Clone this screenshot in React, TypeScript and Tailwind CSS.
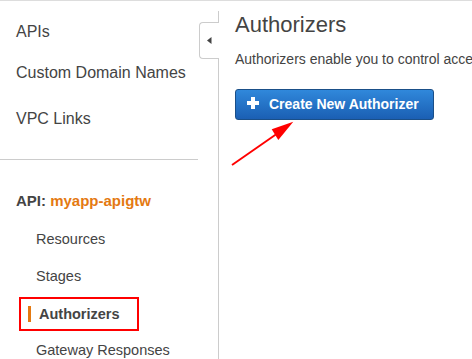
import React from 'react';

// Sidebar links of the API Gateway console
const TOP_LINKS = [
  { label: 'APIs', className: 'mt-0' },
  { label: 'Custom Domain Names', className: 'mt-[21px]' },
  { label: 'VPC Links', className: 'mt-[26px]' },
];

const API_LINKS = ['Resources', 'Stages', 'Authorizers', 'Gateway Responses'];

function PlusIcon() {
  return (
    <svg width="12" height="12" viewBox="0 0 12 12" className="mb-1 shrink-0">
      <rect x="4" y="0" width="4" height="12" fill="#fff" />
      <rect x="0" y="4" width="12" height="4" fill="#fff" />
    </svg>
  );
}

function RedArrow() {
  return (
    <svg
      width="70"
      height="55"
      viewBox="0 0 70 55"
      className="absolute left-[228px] top-[115px] pointer-events-none"
    >
      <line x1="4" y1="49" x2="50" y2="17" stroke="#f00" strokeWidth="2" />
      <polygon points="65.3,5.7 43.7,13.3 50.3,24" fill="#f00" />
    </svg>
  );
}

function ActiveLink({ label }: { label: string }) {
  // selected item, with the red annotation box around it
  return (
    <div className="h-[37px] pt-[2px]">
      <div className="ml-[19px] flex h-[34px] w-[120px] items-center gap-2 border-2 border-[#ff0000] pl-[7px] text-[14.5px] font-bold leading-5">
        <span className="h-4 w-[3px] bg-[#e47911]" />
        {label}
      </div>
    </div>
  );
}

export default function App() {
  return (
    <div className="relative flex h-[359px] w-[472px] overflow-hidden border-t border-[#dddddd] bg-white font-['Liberation_Sans',Arial,sans-serif] text-[#444]">
      {/* Left navigation */}
      <nav className="w-[198px] shrink-0 pt-[21px]">
        {TOP_LINKS.map((link) => (
          <div key={link.label} className={`pl-4 text-[16px] leading-5 ${link.className}`}>
            {link.label}
          </div>
        ))}

        <div className="mt-[30px] border-t border-[#cccccc]" />

        <div className="mt-[31px] pl-4 text-[15px] font-bold leading-5">
          API: <span className="text-[#e47911]">myapp-apigtw</span>
        </div>

        <div className="mt-[10px]">
          {API_LINKS.map((item) =>
            item === 'Authorizers' ? (
              <ActiveLink key={item} label={item} />
            ) : (
              <div key={item} className="h-[37px] pl-9 text-[14.5px] leading-[37px]">
                {item}
              </div>
            )
          )}
        </div>
      </nav>

      {/* Collapse handle */}
      <div className="relative mt-[10px] w-[21px] shrink-0 border-r border-[#cccccc]">
        <button
          type="button"
          className="absolute left-[1px] top-[11px] flex h-[37px] w-[20px] items-center justify-center rounded-l-[4px] border border-r-0 border-[#cccccc] bg-white"
        >
          <svg width="5" height="7" viewBox="0 0 5 7">
            <polygon points="4.5,0 0,3.5 4.5,7" fill="#444" />
          </svg>
        </button>
      </div>

      {/* Main content */}
      <main className="min-w-0 flex-1 pl-4 pt-[10px]">
        <h1 className="text-[22px] leading-7 whitespace-nowrap">Authorizers</h1>
        <p className="mt-[10px] text-[14px] leading-5 whitespace-nowrap">
          Authorizers enable you to control access to your API methods using Cognito User Pools or a Lambda function.
        </p>
        <button
          type="button"
          className="mt-5 flex h-[31px] w-[199px] items-center gap-[10px] rounded-[3px] border border-[#1a4f88] bg-gradient-to-b from-[#3088db] to-[#1b5fb3] pl-[11px] text-[14px] font-bold text-white whitespace-nowrap"
        >
          <PlusIcon />
          Create New Authorizer
        </button>
      </main>

      <RedArrow />
    </div>
  );
}
